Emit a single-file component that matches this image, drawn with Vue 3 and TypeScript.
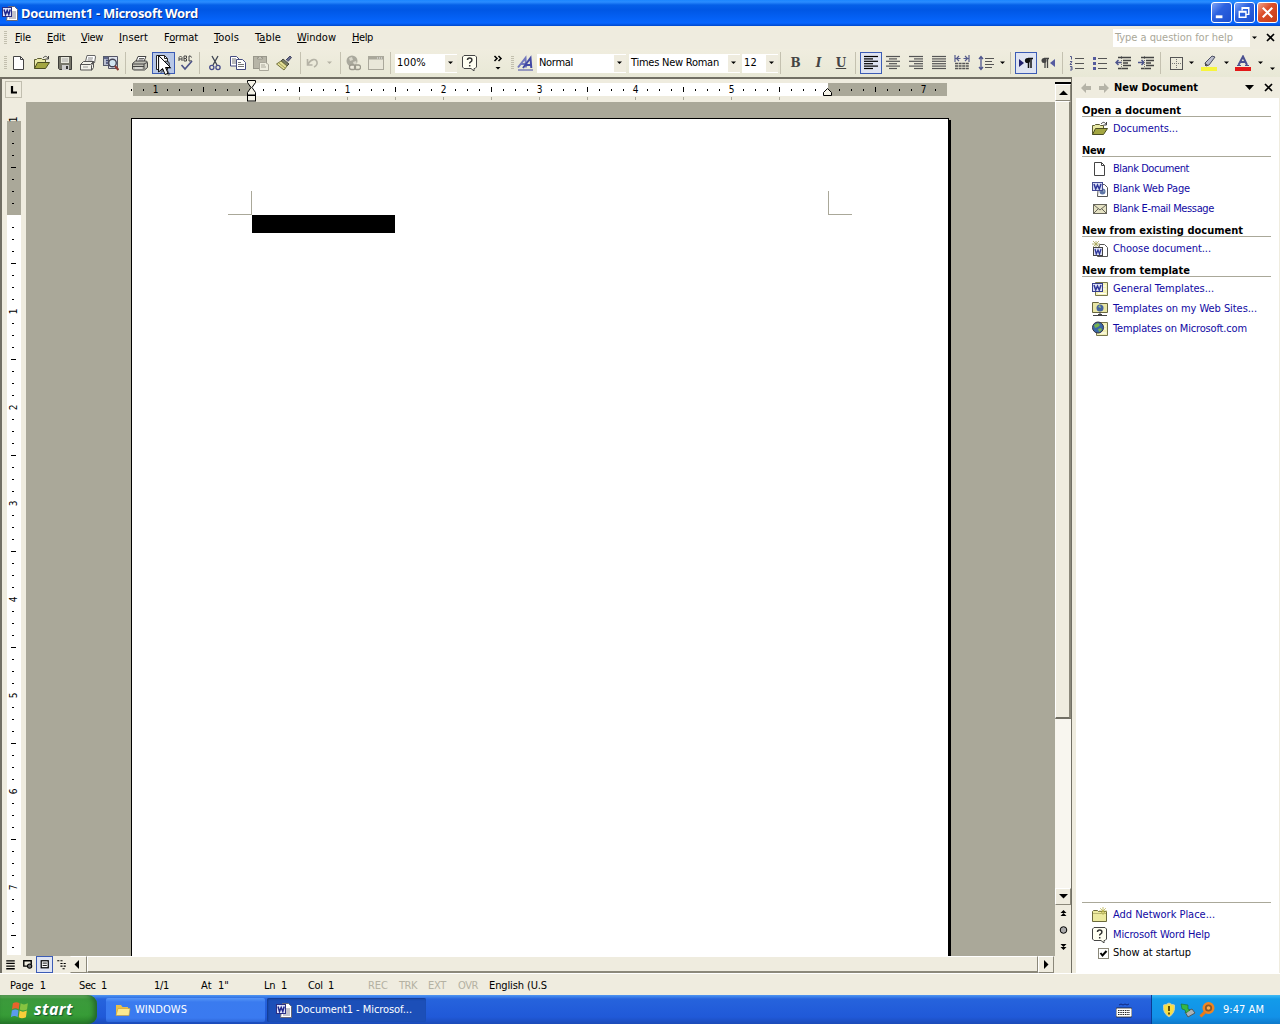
<script setup lang="ts">
interface Tool { k: string; w: number; on?: boolean; text?: string; tw?: number }
interface Link { icon: string; text: string; w: number }
interface Group { title: string; w: number; links: Link[] }

// Stretches or tightens letter spacing so that a label takes a set width.
const vFit = {
  mounted(el: HTMLElement, binding: { value: number }) {
    const n = (el.textContent || '').length
    const natural = el.getBoundingClientRect().width
    el.style.letterSpacing = `${(binding.value - natural) / n}px`
    el.style.width = `${binding.value}px`
  },
}

const page = '<path d="M2.5 1.5h7l3 3v10h-10z" fill="#fff" stroke="#444"/><path d="M9.5 1.5v3h3" fill="none" stroke="#444"/>'
const wordBox = '<path d="M6.500 1.500h6l3 3v11h-11z" fill="#fff" stroke="#667"/><path d="M10 7h4M10 9h4M10 11h4M7 13h7" stroke="#889"/><rect x=".5" y="2.500" width="9" height="9" fill="#dfe3fa" stroke="#2a2f86"/><path d="M2 4.500l1.500 5 1.700-4 1.600 4 1.400-5" fill="none" stroke="#20278c" stroke-width="1.500"/>'
const folder = '<path d="M.5 13.500v-9h2l1-1h4l1 1h3v3" fill="#e9e9a5" stroke="#5b5b32"/><path d="M.5 13.500l3-6h12l-4 6z" fill="#a3a641" stroke="#4c4e22"/><path d="M9 3c2-2.500 4-2 5 .5M14.500 1v3h-3" fill="none" stroke="#444"/>'
const help = '<path d="M2 .5h11l1.500 1.500v10l-1.500 1.500h-1v2.500l-3-2.500h-7l-1.500-1.500v-10z" fill="#fffff2" stroke="#444"/><path d="M5.500 5q0-2 2.200-2t2.200 2q0 1.200-1.200 1.800t-1 1.700M7.700 10v1.600" fill="none" stroke="#333" stroke-width="1.500"/>'
const star = '<path d="M11 0v8M7 4h8M8.200 1.200l5.600 5.600M13.800 1.200L8.200 6.800" stroke="#b9b34b" stroke-width=".8"/>'
const globe = '<circle cx="6" cy="6.500" r="5.500" fill="#3a67a8" stroke="#334"/><path d="M2 4l4-2 2 2-2 2-3 1zM6 8l3-1 1 2-3 2z" fill="#77b34e"/>'

const icons: Record<string, string> = {
  new: page,
  open: folder,
  save: '<path d="M1.500 1.500h13v13h-12l-1-1z" fill="#76766a" stroke="#3d3d38"/><rect x="4" y="2" width="8" height="6" fill="#e9e9de"/><path d="M5 4h6M5 6h6" stroke="#aaa"/><rect x="5" y="10" width="7" height="5" fill="#ccc"/><rect x="9" y="11" width="2" height="3" fill="#333"/>',
  mail: '<path d="M5.500 6.500l1.500-6h8l.5 1.500-1 6" fill="#fff" stroke="#666"/><path d="M8 3h5M7.500 5h5" stroke="#888"/><path d="M.5 9.500l3-3h10l-2 4v4.500h-11zM.5 9.500h10l3-3v6l-2 3" fill="#f2f2ea" stroke="#555"/><path d="M3 12h5" stroke="#999"/>',
  search: '<rect x=".5" y="1.500" width="9" height="9" fill="#b9bfcf" stroke="#555b6c"/><path d="M1 3h8M3 5.500h3M3 8h2" stroke="#414a73" stroke-width="1.500"/><path d="M5.500 1.500h9v12h-9z" fill="#dfe4ee" stroke="#556"/><circle cx="9.500" cy="8" r="3.800" fill="#d2e5f2" stroke="#445" stroke-width="1.400"/><path d="M12 11l3.500 4" stroke="#8c3b34" stroke-width="2.200"/>',
  print: '<path d="M4 6.500L6 1.500h8l-2 5" fill="#fff" stroke="#444"/><path d="M7 3.500h5M6.500 5h5" stroke="#666"/><path d="M.5 8.500l3-2.500h11l1 1.500v5l-3 2.500h-11l-1-1z" fill="#c0c0b6" stroke="#444"/><path d="M1 9h11l3-1.500M1 11.500h11M12 9v5" fill="none" stroke="#444"/><path d="M3 13h7" stroke="#eee"/>',
  preview: '<path d="M1.500.5h8l3 3v11h-11z" fill="#fff" stroke="#222"/><path d="M9.500.5v3h3" fill="none" stroke="#222"/><circle cx="11" cy="9.500" r="3.500" fill="#8e99ad" stroke="#333"/>',
  spell: '<g fill="none" stroke="#444"><path d="M1 6V2.500L2.500 1 4 2.500V6M1 4h3M6 6V1h2.500v2l-.8.500.8.500v2zM6 3.500h2M13.500 2.500L12.500 1H11v5h1.500l1-1"/></g><path d="M3.500 10l3.500 4L14 6" fill="none" stroke="#4c5387" stroke-width="1.700"/>',
  cut: '<path d="M5 1l5 9M11 1L6 10" stroke="#3d4350" stroke-width="1.300"/><circle cx="4.800" cy="12.500" r="2.100" fill="none" stroke="#454b8a" stroke-width="1.300"/><circle cx="11" cy="12.500" r="2.100" fill="none" stroke="#454b8a" stroke-width="1.300"/>',
  copy: '<path d="M.5 1.500h6l2.500 2.500v7H.5z" fill="#fff" stroke="#444b80"/><path d="M2 4h4M2 6h5M2 8h5" stroke="#777"/><path d="M6.500 4.500h6l3 3v7h-9z" fill="#fff" stroke="#444b80"/><path d="M8 7.500h3M8 9.500h6M8 11.500h6" stroke="#777"/>',
  paste: '<rect x=".5" y="1.500" width="13" height="12" fill="#b7b5a7" stroke="#99978b"/><path d="M4.500 4V2.500h1.500L7 1l1 1.500h1.500V4z" fill="#dddbd0" stroke="#99978b"/><path d="M6.500 7.500h6l3 2v6h-9z" fill="#eeeddf" stroke="#aaa89b"/><path d="M8 10h4M8 12h5" stroke="#aaa89b"/>',
  painter: '<path d="M10 5l4-4 1.500 1.500-3.500 4" fill="#676a8c" stroke="#444763"/><path d="M7 4l6 5-2 2-6-5z" fill="#777b66" stroke="#4a4c3e"/><path d="M5 6l6 5-3 4-7.500-6z" fill="#e3df96" stroke="#74733e"/><path d="M3 8l6 5" stroke="#a29e58"/>',
  undo: '<path d="M2.500 4v6h5M3 9c3-5 8-6 9-2 .5 2-1 4-3 5" fill="none" stroke="#b5b3a6" stroke-width="1.600"/>',
  link: '<circle cx="7" cy="6" r="5.500" fill="#aaa99d"/><path d="M4 3l3-1 1 3-3 1zM8 7l3-1 1 3-3 1z" fill="#dad8cb"/><rect x="4.500" y="10" width="6" height="4.500" rx="2" fill="#efecdf" stroke="#9b998d" stroke-width="1.300"/><rect x="9.500" y="10" width="6" height="4.500" rx="2" fill="none" stroke="#9b998d" stroke-width="1.300"/>',
  table: '<rect x=".500" y="1.500" width="15" height="13" fill="#e9e7d9" stroke="#aaa89b"/><path d="M0 3h16" stroke="#aaa89b" stroke-width="3"/><path d="M9 3h1M11 3h1M13 3h1" stroke="#eee"/>',
  help,
  chev: '<path d="M4.500 1l2.500 2.500L4.500 6M8.500 1l2.500 2.500L8.500 6" fill="none" stroke="#000" stroke-width="1.500"/><path d="M5.500 12h5L8 14.500z"/>',
  aa: '<path d="M1 12.500L8.500 3l.5 9.500M4 9h5" fill="none" stroke="#7378bd" stroke-width="2"/><path d="M6 13L13.500 3l.8 10M9 10h5" fill="none" stroke="#4249a5" stroke-width="2"/><path d="M1 15h15" stroke="#4249a5"/>',
  dist: '<path d="M1 0v7M15 0v7M1.500 3.500h5M9.500 3.500h5M5 1L2.500 3.500 5 6M11 1l2.500 2.500L11 6" fill="none" stroke="#555b8c" stroke-width="1.200"/><path d="M1 8.500h14M1 11h14M1 13.500h14" stroke="#555" stroke-width="1.500" stroke-dasharray="3 .6"/>',
  spacing: '<path d="M3 2v12M1 4l2-2.500L5 4M1 12l2 2.500L5 12" fill="none" stroke="#4e558d" stroke-width="1.300"/><path d="M7 3.500h9M7 6.500h7M7 9.500h9M7 12.500h7" stroke="#555"/>',
  ltr: '<path d="M1 4v8l5-4z" fill="#20206e"/><path d="M10.500 3v10M13 3v10M15 3.500h-5" stroke="#111" stroke-width="1.500"/><circle cx="9.500" cy="5.500" r="2.600" fill="#111"/>',
  rtl: '<path d="M15 4v8l-5-4z" fill="#555ba0"/><path d="M5 3v10M7.500 3v10M9 3.500H4" stroke="#444" stroke-width="1.300"/><circle cx="4" cy="5.500" r="2.500" fill="#444"/>',
  num: '<path d="M1 1.500h1.500v3M1 6.500h2l-2 3h2M1 11.500h2v1.500H1.500M3 13v2H1" fill="none" stroke="#555b8c"/><path d="M6 3.500h9M6 8.500h9M6 13.500h9" stroke="#555"/>',
  bul: '<path d="M1 2h3v3H1zM1 7h3v3H1zM1 12h3v3H1z" fill="#555b9d"/><path d="M6 3.500h9M6 8.500h9M6 13.500h9" stroke="#555"/>',
  outd: '<path d="M3 2.500h13M8 5.500h8M8 8h5M8 10.500h8M3 13.500h10" stroke="#444" stroke-width="1.300"/><path d="M7 7.500H1M3.500 5L1 7.500 3.500 10" fill="none" stroke="#4e558d" stroke-width="1.500"/><path d="M6.500 1v14" stroke="#777" stroke-dasharray="1 1"/>',
  ind: '<path d="M3 2.500h13M8 5.500h8M8 8h5M8 10.500h8M3 13.500h10" stroke="#444" stroke-width="1.300"/><path d="M0 7.500h6M3.500 5L6 7.500 3.500 10" fill="none" stroke="#4e558d" stroke-width="1.500"/><path d="M6.500 1v14" stroke="#777" stroke-dasharray="1 1"/>',
  border: '<rect x="2.500" y="2.500" width="12" height="12" fill="none" stroke="#555"/><path d="M8.500 4v10M4 8.500h10" stroke="#777" stroke-dasharray="1 1"/>',
  hilite: '<rect x="0" y="12" width="16" height="4" fill="#f7f53c"/><path d="M4 8l7-7 3 1-6 8-3 1z" fill="#b9bccb" stroke="#4c4f63"/><path d="M4 8l3 2-3 1z" fill="#444"/>',
  color: '<rect x="0" y="12" width="16" height="4" fill="#e31818"/><path d="M3.500 10L8 1.500l4 8.500M5 7h6" fill="none" stroke="#4b5190" stroke-width="2"/><path d="M2 10.500h4M10 10.500h4" stroke="#4b5190"/>',
  web: '<path d="M6.500 3.500h6l3 3v9h-10z" fill="#fff" stroke="#555"/><circle cx="10.500" cy="10.500" r="3" fill="#5d75a5"/><path d="M8 10l3-1 1 2" stroke="#9ab" fill="none"/><rect x=".5" y="1.500" width="10" height="8" fill="#d8dcf5" stroke="#444b91"/><path d="M2 3l1.700 5L5.500 4l1.800 4L9 3" fill="none" stroke="#30389a" stroke-width="1.500"/>',
  email: '<rect x="1.500" y="3.500" width="13" height="9" fill="#e6e3c4" stroke="#66655a"/><path d="M2 4l6 5 6-5M2 12l4.500-4.500M14 12L9.500 7.500" fill="none" stroke="#66655a"/>',
  choose: '<path d="M7.500 3.500h5l3 3v9h-10z" fill="#fff" stroke="#555"/><rect x="1.500" y="6.500" width="9" height="8" fill="#dfe2f7" stroke="#444"/><path d="M3 8l1.300 5L6 9l1.500 4L9 8" fill="none" stroke="#30389a" stroke-width="1.300"/><path d="M4 0v6M0 3h8M1 0l6 6M7 0L1 6" stroke="#a5a255" stroke-width=".8"/>',
  general: '<path d="M3.500 1.500h12v13h-12z" fill="#f4f2b8" stroke="#77764c"/><path d="M11 5h3M11 8h3M6 12.500h8" stroke="#fff"/><rect x=".5" y="2.500" width="10" height="8" fill="#dfe2f7" stroke="#353d8c"/><path d="M2 4l1.700 5L5.500 5l1.800 4L9 4" fill="none" stroke="#30389a" stroke-width="1.500"/>',
  sites: '<path d="M.5 1.500h6l1 1h8v9h-15z" fill="#e9e7a7" stroke="#67663f"/><circle cx="8" cy="7" r="3.500" fill="#4563a0"/><path d="M6 6l2-2 1 3z" fill="#a1c675"/><path d="M8 11v3M1 14.500h14M6 13.500h4" stroke="#444"/>',
  ms: '<path d="M4.500 1.500h11v13h-11z" fill="#f1efb4" stroke="#77764c"/><path d="M12 5h2M12 8h2M8 12h6" stroke="#fff"/>' + globe,
  place: '<path d="M.5 14.500v-10l1-1h4l1 1h8v10z" fill="#ecea9f" stroke="#6b6a3c"/><path d="M1 6.500h13" stroke="#bbb873"/>' + star,
  word: wordBox,
  win: '<g transform="skewX(-8)"><path d="M3 3q3-2 6 0v5.500q-3-2-6 0z" fill="#e8632c"/><path d="M10 3q3 2 6.500 0v5.500q-3.500 2-6.500 0z" fill="#86c440"/><path d="M3 9.500q3-2 6 0v6q-3-2-6 0z" fill="#5b9bec"/><path d="M10 9.500q3 2 6.500 0v6q-3.500 2-6.500 0z" fill="#f8ce3a"/></g>',
  dir: '<path d="M1 13V3h5l1.500 2H13v8z" fill="#e9c04a"/><path d="M1 13.500l2-7h12l-1 7z" fill="#fbe990" stroke="#cc9d2e" stroke-width=".6"/>',
  kbd: '<path d="M3 3l2-1 2 1 2-1 2 1 2-1" fill="none" stroke="#122a80"/><rect x="0" y="6" width="16" height="9" rx="1" fill="#fff" stroke="#222" stroke-width=".8"/><path d="M2 8.500h12M2 10.500h12M2 12.500h12" stroke="#222" stroke-width="1.200" stroke-dasharray="1.500 .8"/>',
  shield: '<path d="M8 1q3 2 5.500 2 1 8-5.500 12Q1.500 11 2.500 3 5 3 8 1z" fill="#f7df45" stroke="#c9cdb0" stroke-width="1"/><path d="M8 4v5M8 10.500v2" stroke="#544300" stroke-width="1.800"/>',
  safe: '<path d="M5 10l7-3 3 4-7 4z" fill="#a9b4b8" stroke="#4c5960"/><path d="M1 2l7 1v4l2 1-4 3-1-3-3-1z" fill="#37b744" stroke="#17702b" stroke-width=".6"/>',
  find: '<circle cx="9.500" cy="6" r="4.800" fill="#8b5a2a" stroke="#f18522" stroke-width="2.400"/><circle cx="9.500" cy="6" r="1.800" fill="#ffb053"/><path d="M6 10L1.500 14.500" stroke="#e97817" stroke-width="3"/>',
  v1: '<path d="M4 4.500h8M4 7h8M4 9.500h8M4 12h8" stroke="#000" stroke-width="1.200"/>',
  v2: '<path d="M11.500 8V4.500h-7v5h4" fill="none" stroke="#000" stroke-width="1.300"/><circle cx="10" cy="9.500" r="2" fill="#777" stroke="#000"/>',
  v3: '<rect x="4.500" y="4" width="7.500" height="7.500" fill="#fff" stroke="#000" stroke-width="1.300"/><path d="M6 6.500h4.500M6 9h4.500" stroke="#000"/>',
  v4: '<path d="M4 4.500h5M7 7h5M7 9.500h5M9 12h3" stroke="#000" stroke-dasharray="2 1"/>',
}
const lines = (a: number[][]) => a.map(([x, w], i) => `<path d="M${x} ${1.5 + i * 2.4}h${w}" stroke="currentColor" stroke-width="1.200"/>`).join('')
icons.left = lines([[1, 14], [1, 9], [1, 14], [1, 9], [1, 14], [1, 9]])
icons.center = lines([[1, 14], [4, 8], [1, 14], [4, 8], [1, 14], [4, 8]])
icons.right = lines([[1, 14], [6, 9], [1, 14], [6, 9], [1, 14], [6, 9]])
icons.just = lines([[1, 14], [1, 14], [1, 14], [1, 14], [1, 14], [1, 14]])

const t = (k: string, w: number, on = false): Tool => ({ k, w, on })
const tools: Tool[] = [
  t('handle', 7), t('new', 23), t('open', 23.2), t('save', 23.2), t('mail', 23.2), t('search', 23.4), t('sep', 5.5),
  t('print', 23.5), t('preview', 23, true), t('spell', 22), t('sep', 6), t('cut', 24), t('copy', 23), t('paste', 23),
  t('painter', 23), t('sep', 10), t('undo', 15), t('dim', 18), t('sep', 3), t('link', 23), t('table', 22), t('sep', 8),
  { k: 'combo', w: 62, text: '100%', tw: 29 }, t('help', 27), t('chev', 28), t('handle', 2), t('aa', 22), t('gap', 1),
  { k: 'combo', w: 89, text: 'Normal', tw: 34 }, t('gap', 3), { k: 'combo', w: 111, text: 'Times New Roman', tw: 88 }, t('gap', 2),
  { k: 'combo', w: 36, text: '12', tw: 13 }, t('sep', 6), { k: 'letter', w: 23, text: 'B' }, { k: 'letter', w: 23, text: 'I' },
  { k: 'letter', w: 22, text: 'U' }, t('sep', 8), t('left', 22, true), t('center', 23), t('right', 23), t('just', 23), t('dist', 23),
  t('spacing', 25), t('arrow', 7), t('sep', 9), t('ltr', 22, true), t('rtl', 23), t('sep', 6), t('num', 23), t('bul', 23),
  t('outd', 23), t('ind', 23), t('sep', 6), t('border', 24), t('arrow', 8), t('hilite', 27), t('arrow', 7), t('color', 27),
  t('arrow', 7), t('more', 17),
]

const menus: [string, number, number][] = [
  ['File', 0, 16], ['Edit', 0, 18], ['View', 0, 22], ['Insert', 0, 29], ['Format', 1, 34], ['Tools', 0, 25], ['Table', 1, 26], ['Window', 0, 39], ['Help', 0, 21],
]
const groups: Group[] = [
  { title: 'Open a document', w: 99, links: [{ icon: 'open', text: 'Documents...', w: 65 }] },
  { title: 'New', w: 23, links: [{ icon: 'new', text: 'Blank Document', w: 76 }, { icon: 'web', text: 'Blank Web Page', w: 77 }, { icon: 'email', text: 'Blank E-mail Message', w: 101 }] },
  { title: 'New from existing document', w: 161, links: [{ icon: 'choose', text: 'Choose document...', w: 98 }] },
  { title: 'New from template', w: 108, links: [{ icon: 'general', text: 'General Templates...', w: 101 }, { icon: 'sites', text: 'Templates on my Web Sites...', w: 144 }, { icon: 'ms', text: 'Templates on Microsoft.com', w: 134 }] },
]
const status: [string, number, number, boolean][] = [
  ['Page\u00a0 1', 36, 33, false], ['Sec\u00a0 1', 28, 47, false], ['1/1', 15, 32, false], ['At\u00a0 1"', 28, 35, false], ['Ln\u00a0 1', 23, 21, false], ['Col\u00a0 1', 26, 34, false],
  ['REC', 20, 11, true], ['TRK', 18, 11, true], ['EXT', 18, 12, true], ['OVR', 20, 11, true], ['English (U.S', 58, 0, false],
]

// Ruler marks stand every 1/8 inch (12px); whole inches carry a number.
interface Mark { p: number; kind: 'num' | 'half' | 'dot'; n: number }
function marks(from: number, to: number, zero: number, skip: number[]): Mark[] {
  const out: Mark[] = []
  for (let i = from; i <= to; i++) {
    if (skip.includes(i)) continue
    out.push({ p: zero + i * 12, kind: i % 8 === 0 ? 'num' : i % 4 === 0 ? 'half' : 'dot', n: Math.abs(i / 8) })
  }
  return out
}
const hMarks = marks(-10, 57, 251, [0, 48])
const vMarks = marks(-8, 61, 215, [0])
const stops = Array.from({ length: 11 }, (_, i) => 299 + i * 48)
</script>

<template>
  <div class="desk">
    <header class="title">
      <svg class="ic" viewBox="0 0 16 16" v-html="icons.word" />
      <b v-fit="177">Document1 - Microsoft Word</b>
      <div class="wbtns">
        <span class="wb"><svg viewBox="0 0 20 20"><path d="M4 14.500h7" stroke="#fff" stroke-width="3" /></svg></span>
        <span class="wb"><svg viewBox="0 0 20 20"><path d="M7.500 8V5h7v7h-3M7 5.500h8" fill="none" stroke="#fff" stroke-width="1.500" /><path d="M4.500 9h7v6h-7zM4 9.500h8" fill="none" stroke="#fff" stroke-width="1.500" /></svg></span>
        <span class="wb red"><svg viewBox="0 0 20 20"><path d="M5 5l10 10M15 5L5 15" stroke="#fff" stroke-width="2.200" /></svg></span>
      </div>
    </header>
    <nav class="menu">
      <i class="grip" />
      <span v-for="m in menus" :key="m[0]" v-fit="m[2]">{{ m[0].slice(0, m[1]) }}<u>{{ m[0][m[1]] }}</u>{{ m[0].slice(m[1] + 1) }}</span>
      <div class="ask"><span v-fit="118">Type a question for help</span></div>
      <svg class="dn" viewBox="0 0 7 4"><path d="M1 .5h5L3.500 3z" /></svg>
      <svg class="x" viewBox="0 0 9 9"><path d="M1 1l7 7M8 1L1 8" stroke="#000" stroke-width="1.700" /></svg>
    </nav>
    <div class="tools">
      <div v-for="(b, i) in tools" :key="i" class="tool" :class="[b.k, { on: b.on }]" :style="{ width: b.w + 'px' }">
        <template v-if="b.k === 'combo'"><span v-fit="b.tw || 0">{{ b.text }}</span><i><svg viewBox="0 0 7 4"><path d="M1 .5h5L3.500 3z" /></svg></i></template>
        <span v-else-if="b.k === 'letter'" :class="'l' + b.text">{{ b.text }}</span>
        <svg v-else-if="['arrow', 'dim', 'more'].includes(b.k)" class="dn" viewBox="0 0 7 4"><path d="M1 .5h5L3.500 3z" /></svg>
        <i v-else-if="b.k === 'handle'" class="grip" />
        <svg v-else-if="icons[b.k]" class="ic" viewBox="0 0 16 16" v-html="icons[b.k]" />
      </div>
      <svg class="cursor" viewBox="0 0 15 22"><path d="M2.500 2.500l11 11.500-4 .5 3 6-2.500 1-2.500-6-5 4z" fill="#0006" /><path d="M.6 1v16.500l4-3.500 2.500 6 3-1.200-2.600-5.800h5z" fill="#fff" stroke="#000" /></svg>
    </div>

    <main>
      <section class="editor">
        <div class="work">
          <div class="side">
            <div class="corner"><span><svg viewBox="0 0 8 8"><path d="M2 0v6.500h5" fill="none" stroke="#000" stroke-width="2.200" /></svg></span></div>
            <svg width="24" height="853" viewBox="2 102 24 853">
              <rect x="7" y="121" width="14" height="94" fill="#aaa899" /><rect x="7" y="215" width="14" height="740" fill="#fff" />
              <template v-for="m in vMarks" :key="m.p">
                <text v-if="m.kind === 'num'" :transform="`translate(17 ${m.p + 0.5}) rotate(-90)`" text-anchor="middle" class="rt">{{ m.n }}</text>
                <rect v-else-if="m.kind === 'half'" x="11" :y="m.p" width="5" height="1" />
                <rect v-else x="12" :y="m.p" width="2" height="1" />
              </template>
            </svg>
          </div>
          <div class="body">
            <svg width="1029" height="23" viewBox="26 79 1029 23">
              <rect x="133" y="83" width="118" height="13" fill="#aaa899" /><rect x="251" y="83" width="577" height="13" fill="#fff" /><rect x="828" y="83" width="119" height="13" fill="#aaa899" />
              <template v-for="m in hMarks" :key="m.p">
                <text v-if="m.kind === 'num'" :x="m.p + 0.5" y="93" text-anchor="middle" class="rt">{{ m.n }}</text>
                <rect v-else-if="m.kind === 'half'" :x="m.p" y="87" width="1" height="5" />
                <rect v-else :x="m.p" y="89" width="1" height="2" />
              </template>
              <rect v-for="s in stops" :key="s" :x="s" y="97" width="1" height="3" fill="#aaa899" />
              <path d="M247.500 80.500h8v2l-3.500 5 3.500 5v2.500h-8v-2.500l3.500-5-3.500-5z" fill="#f4f2e7" stroke="#000" /><rect x="247.500" y="95.500" width="8" height="5.500" fill="#f4f2e7" stroke="#000" />
              <path d="M823.500 95.500v-3l4-4 4 4v3z" fill="#f4f2e7" stroke="#000" />
            </svg>
            <div class="canvas">
              <div class="page">
                <div class="crops"><i class="cl" /><i class="cr" /></div>
                <div class="sel" />
              </div>
              <i class="shadow" />
            </div>
          </div>
          <div class="vscroll">
            <i class="split" />
            <span class="sb"><svg viewBox="0 0 9 5"><path d="M0 5h9L4.500 .5z" /></svg></span>
            <span class="thumb" />
            <span class="track" />
            <span class="sb"><svg viewBox="0 0 9 5"><path d="M0 0h9L4.500 4.500z" /></svg></span>
            <svg width="17" height="50" viewBox="0 0 17 50"><path d="M5.500 8l3-3 3 3zM5.500 11l3-3 3 3zM5.500 39h6l-3 3zM5.500 42h6l-3 3z" /><circle cx="8.500" cy="25" r="3.300" fill="#aaa" stroke="#000" /></svg>
          </div>
        </div>
        <div class="hrow">
          <svg v-for="v in ['v1', 'v2', 'v3', 'v4']" :key="v" class="vw" :class="{ on: v === 'v3' }" viewBox="0 0 16 16" v-html="icons[v]" />
          <span class="sb"><svg class="vert" viewBox="0 0 5 9"><path d="M5 0v9L.5 4.500z" /></svg></span>
          <span class="hthumb" />
          <span class="sb"><svg class="vert" viewBox="0 0 5 9"><path d="M0 0v9l4.500-4.500z" /></svg></span>
        </div>
      </section>
      <aside>
        <div class="phead">
          <svg width="28" height="10" viewBox="0 0 28 10"><path d="M0 5l5-5v3h5v4H5v3zM28 5l-5-5v3h-5v4h5v3z" fill="#b5b3a7" /></svg>
          <b v-fit="84">New Document</b>
          <svg class="big" width="9" height="5" viewBox="0 0 9 5"><path d="M0 0h9L4.500 5z" /></svg>
          <svg width="9" height="9" viewBox="0 0 9 9"><path d="M1 1l7 7M8 1L1 8" stroke="#000" stroke-width="1.700" /></svg>
        </div>
        <div class="pane">
          <section v-for="g in groups" :key="g.title">
            <h3><b v-fit="g.w">{{ g.title }}</b></h3>
            <a v-for="l in g.links" :key="l.text"><svg class="ic" viewBox="0 0 16 16" v-html="icons[l.icon]" /><span v-fit="l.w">{{ l.text }}</span></a>
          </section>
          <footer>
            <a><svg class="ic" viewBox="0 0 16 16" v-html="icons.place" /><span v-fit="102">Add Network Place...</span></a>
            <a><svg class="ic" viewBox="0 0 16 16" v-html="help" /><span v-fit="97">Microsoft Word Help</span></a>
            <label><i><svg viewBox="0 0 9 9"><path d="M1.500 4l2 2.500L7.500 2" fill="none" stroke="#000" stroke-width="2" /></svg></i><span v-fit="78">Show at startup</span></label>
          </footer>
        </div>
      </aside>
    </main>

    <div class="status">
      <span v-for="s in status" :key="s[0]" v-fit="s[1]" :class="{ off: s[3] }" :style="{ marginRight: s[2] + 'px' }">{{ s[0] }}</span>
    </div>
    <div class="taskbar">
      <div class="start"><svg width="20" height="20" viewBox="0 0 18 18" v-html="icons.win" /><b v-fit="39">start</b></div>
      <div class="task"><svg class="ic" viewBox="0 0 16 16" v-html="icons.dir" /><span v-fit="52">WINDOWS</span></div>
      <div class="task act"><svg class="ic" viewBox="0 0 16 16" v-html="icons.word" /><span v-fit="116">Document1 - Microsof...</span></div>
      <svg class="ic kbd" viewBox="0 0 16 16" v-html="icons.kbd" />
      <div class="tray">
        <svg v-for="k in ['shield', 'safe', 'find']" :key="k" class="ic" viewBox="0 0 16 16" v-html="icons[k]" />
        <span v-fit="41">9:47 AM</span>
      </div>
    </div>
  </div>
</template>

<style>
html, body { margin: 0; overflow: hidden; }
</style>
<style scoped>
* { box-sizing: border-box; }
.desk { width: 1280px; height: 1024px; display: flex; flex-direction: column; overflow: hidden; background: #efecdf; color: #000; font: 11px/14px "DejaVu Sans Condensed", "Noto Sans", sans-serif; white-space: nowrap; }
span, b { display: inline-block; flex: none; }
svg { flex: none; display: block; }
.ic { width: 16px; height: 16px; }
.title { height: 26px; flex: none; display: flex; align-items: center; padding: 0 2px 1px 2px; color: #fff; background: linear-gradient(#1c86ff 0, #2a8cff 2px, #0560e8 5px, #0057e5 10px, #0562f7 19px, #0866ff 23px, #0048cc 26px); }
.title .ic { margin-right: 3px; }
.title b { font: bold 13px/18px "Noto Sans", sans-serif; text-shadow: 1px 1px #0a2f8a; }
.wbtns { margin-left: auto; display: flex; gap: 2px; }
.wb { width: 21px; height: 21px; border: 1px solid #fff; border-radius: 3px; background: linear-gradient(135deg, #7ea4f7, #2c62e0 40%, #1c4fcf); }
.wb svg { width: 19px; height: 19px; }
.red { background: linear-gradient(135deg, #f0a38b, #dc4f2b 40%, #c43c16); }
.menu { height: 23px; flex: none; display: flex; align-items: center; padding: 0 0 0 4px; }
.menu > span { margin-right: 16px; padding-top: 1px; height: 15px; }
.menu .grip { margin-right: 8px; }
.menu u { text-underline-offset: 1px; }
.grip { width: 3px; height: 14px; display: block; flex: none; background: repeating-linear-gradient(#c2bfae 0 1px, transparent 1px 2px); }
.ask { margin-left: auto; width: 137px; height: 18px; padding: 2px 0 0 2px; background: #fff; color: #aaa899; }
.dn { width: 7px; height: 4px; }
.menu > .dn { margin-left: 1px; }
.menu > .x { width: 9px; height: 9px; margin: 0 5px 0 8px; }
.tools { position: relative; height: 28px; flex: none; display: flex; align-items: center; background: linear-gradient(#f0eddf, #e8e8d6); }
.tool { height: 22px; flex: none; display: flex; align-items: center; justify-content: center; color: #555; }
.tool.on { border: 1px solid #3c5cb5; background: #dfe4f2; color: #000; }
.tool.preview { background: #b7c7e6; }
.tool.handle { justify-content: flex-end; }
.sep::before { content: ""; width: 1px; height: 22px; background: #c4c1b0; }
.combo { height: 19px; background: #fff; color: #000; justify-content: space-between; padding-left: 2px; }
.combo i { width: 12px; height: 17px; display: flex; align-items: center; justify-content: center; background: #efecdf; }
.combo svg { width: 7px; height: 4px; }
.dim { fill: #b5b3a6; }
.more { align-items: flex-end; padding-bottom: 3px; }
.letter { font: bold 12px/16px "DejaVu Serif", "Liberation Serif", serif; color: #444; }
.lI { font-style: italic; }
.lU { text-decoration: underline; }
.cursor { position: absolute; left: 158px; top: 5px; width: 15px; height: 23px; }
main { height: 896px; flex: none; display: flex; }
.editor { width: 1072px; flex: none; display: flex; flex-direction: column; border: 2px solid #716f64; border-width: 2px 1px 0 2px; }
.work { height: 877px; display: flex; }
.side { width: 24px; flex: none; }
.corner { height: 23px; padding: 2px 0 0 3px; }
.corner span { width: 17px; height: 17px; border: 1px solid #c1beaf; display: flex; align-items: center; justify-content: center; }
.corner svg { width: 8px; height: 8px; }
.rt { font: 10px "DejaVu Sans Condensed", sans-serif; }
.body { width: 1029px; flex: none; }
.canvas { height: 854px; background: #aaa899; padding: 16px 0 0 105px; overflow: hidden; display: flex; }
.page { width: 818px; height: 838px; background: #fff; border: 1px solid #000; border-width: 1px 1px 0 1px; padding: 72px 96px 0; }
.shadow { width: 2px; margin-top: 2px; background: #000; }
.crops { height: 24px; width: 624px; display: flex; justify-content: space-between; }
.crops i { width: 24px; border-bottom: 1px solid #aaa899; }
.cl { border-right: 1px solid #aaa899; }
.cr { border-left: 1px solid #aaa899; }
.sel { margin-left: 24px; width: 143px; height: 18px; background: #000; }
.vscroll { width: 16px; flex: none; display: flex; flex-direction: column; }
.split { height: 5px; border-bottom: 2px solid #000; }
.sb { width: 16px; height: 17px; display: flex; align-items: center; justify-content: center; border: 1px solid #fff; border-right-color: #8b887a; border-bottom-color: #8b887a; background: #efecdf; }
.sb svg { width: 9px; height: 5px; }
.sb .vert { width: 5px; height: 9px; }
.thumb { height: 618px; border: 1px solid #fff; border-right: 2px solid #8b887a; border-bottom: 2px solid #716f64; }
.track { height: 169px; background: #f8f6ef; }
.hrow { height: 17px; display: flex; align-items: stretch; }
.vw { width: 17px; height: 17px; }
.vw.on { border: 1px solid #3c5cb5; background: #dfe4f2; }
.hrow .vw + .sb { width: 17px; border-left-color: #efecdf; padding-right: 4px; }
.hthumb { width: 951px; border: 1px solid #fff; border-right-color: #8b887a; border-bottom: 2px solid #8b887a; }
aside { width: 204px; margin-left: 4px; display: flex; flex-direction: column; }
.phead { height: 21px; padding: 0 7px 0 5px; display: flex; align-items: center; }
.phead b { margin-left: 5px; padding-top: 1px; height: 15px; }
.big { margin: 0 14px 0 auto; position: relative; left: 4px; }
.pane { height: 875px; background: #fff; padding: 5px 8px 0 6px; width: 203px; display: flex; flex-direction: column; }
h3 { margin: 0 0 2px; height: 14px; border-bottom: 1px solid #aaa899; font-size: 11px; line-height: 15px; }
h3 b { padding-top: 1px; line-height: 14px; }
.pane section { padding-bottom: 4px; }
a { height: 20px; display: flex; align-items: center; gap: 5px; padding-left: 10px; color: #1109a3; }
footer { margin-top: auto; height: 71px; border-top: 1px solid #aaa899; padding-top: 2px; }
label { display: flex; align-items: center; height: 16px; padding-left: 16px; gap: 4px; }
label i { width: 11px; height: 11px; border: 1px solid #8b887a; }
label svg { width: 9px; height: 9px; }
.status { height: 22px; flex: none; display: flex; align-items: center; padding: 2px 0 0 10px; border-top: 1px solid #fff; }
.off { color: #b4b1a2; }
.taskbar { height: 29px; flex: none; display: flex; align-items: center; color: #fff; background: linear-gradient(#4f96f2, #2663dd 4px, #2059d8 22px, #1b4bb8); }
.start { width: 97px; height: 29px; display: flex; align-items: center; padding-left: 10px; gap: 4px; border-radius: 0 9px 9px 0; background: linear-gradient(#7bbf72, #3c9a3c 4px, #379c37 20px, #277f29); box-shadow: inset -3px 0 5px #23662a; margin-right: 9px; }
.start b { font: italic bold 16px/20px "Noto Sans", sans-serif; text-shadow: 1px 1px 1px #153; margin-top: -2px; }
.task { width: 159px; height: 24px; display: flex; align-items: center; gap: 4px; padding-left: 9px; margin-right: 2px; border-radius: 2px; background: linear-gradient(#5796f7, #3a7bef 4px, #3a7af0 20px, #2c66d8); }
.act { background: #1c4fb8; box-shadow: inset 1px 1px 2px #123a8d; }
.kbd { margin-left: auto; margin-right: 19px; }
.tray { width: 129px; height: 29px; display: flex; align-items: center; padding-left: 9px; gap: 3px; border-left: 1px solid #0b3c94; background: linear-gradient(#40bbf5, #129bea 4px, #1291e8 22px, #0e79ca); }
.tray span { margin-left: 5px; }
</style>
